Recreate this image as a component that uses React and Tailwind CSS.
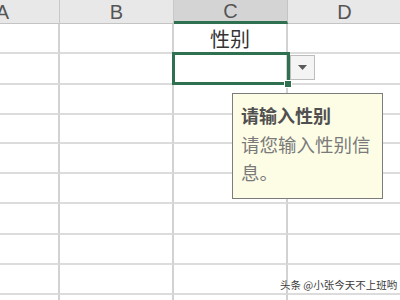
import React from 'react'

const cols = ['A', 'B', 'C', 'D']
const rowHeights = [30, 31, 30, 29, 30, 30, 31, 30, 30, 30]

function HeaderCell({ label, active }) {
  return (
    <div
      className={
        active
          ? 'h-[24px] flex items-center justify-center bg-[#d4d4d4] border-r border-[#c4c4c4] border-b-[3px] border-b-[#2f7050] text-[20px] text-[#555]'
          : 'h-[24px] flex items-center justify-center bg-[#e8e8e8] border-r border-[#c8c8c8] border-b border-b-[#c4c4c4] text-[20px] text-[#555]'
      }
    >
      {label}
    </div>
  )
}

function App() {
  return (
    <div
      className="relative w-[400px] h-[300px] overflow-hidden bg-white"
      style={{ fontFamily: '"Liberation Sans", "Noto Sans CJK SC", sans-serif' }}
    >
      <div className="ml-[-54px] grid grid-cols-[114px_114px_114px_114px]">
        {cols.map((c) => (
          <HeaderCell key={c} label={c} active={c === 'C'} />
        ))}
        {rowHeights.map((h, r) =>
          cols.map((c) => (
            <div
              key={c + r}
              className="border-r-2 border-b-2 border-r-[#d2d2d2] border-b-[#dcdcdc] flex items-center justify-center"
              style={{ height: h }}
            >
              {r === 0 && c === 'C' && (
                <span className="text-[20px] text-[#333] pt-[2px]" style={{ fontFamily: '"Noto Sans CJK SC", sans-serif' }}>
                  性别
                </span>
              )}
            </div>
          ))
        )}
      </div>

      {/* selected cell */}
      <div className="absolute left-[172px] top-[52px] w-[118px] h-[33px] border-[3px] border-[#2f7050]" />
      <div className="absolute left-[284px] top-[80px] w-[8px] h-[8px] bg-[#2f7050] border border-white" />

      {/* dropdown button */}
      <div className="absolute left-[290px] top-[55px] w-[25px] h-[25px] bg-[#f4f4f4] border border-[#bdbdbd] flex items-center justify-center">
        <svg width="9" height="5" viewBox="0 0 9 5">
          <path d="M0 0h9L4.5 5z" fill="#5a5a5a" />
        </svg>
      </div>

      {/* input message */}
      <div
        className="absolute left-[232px] top-[93px] w-[151px] h-[106px] bg-[#fdfde6] border border-[#7c7c7c] pl-[8px] pt-[8px] pr-[4px]"
        style={{ fontFamily: '"Noto Sans CJK SC", sans-serif' }}
      >
        <div className="text-[18px] leading-[26px] font-bold text-[#505050]">请输入性别</div>
        <div className="text-[18.5px] leading-[28px] text-[#7a7a7a] mt-[2px]">请您输入性别信息。</div>
      </div>

      {/* watermark */}
      <div
        className="absolute left-[280px] top-[277px] whitespace-nowrap text-[10.5px] text-[#3a3a3a]"
        style={{ fontFamily: '"Noto Sans CJK SC", sans-serif', textShadow: '0 0 2px #fff' }}
      >
        头条 @小张今天不上班哟
      </div>
    </div>
  )
}

export default App
